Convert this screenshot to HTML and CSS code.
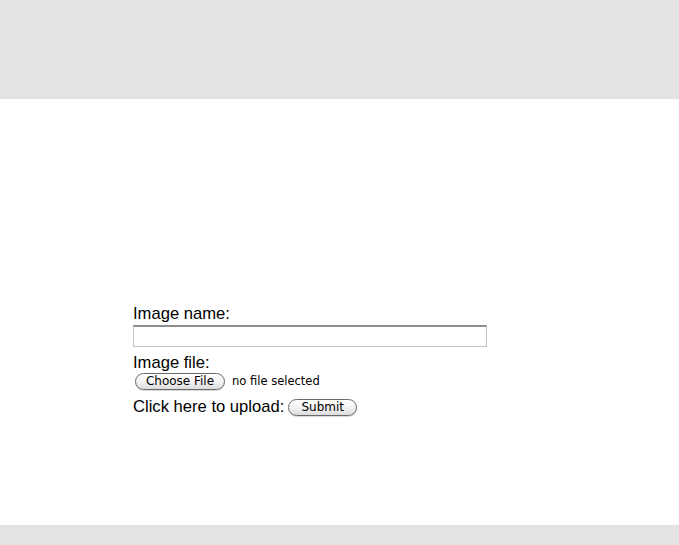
FILE: index.html
```html
<!DOCTYPE html>
<html>
<head>
<meta charset="utf-8">
<link rel="stylesheet" href="styles.css">
</head>
<body>
<div class="header"></div>
<div class="main">
  <form class="upload-form">
    <div class="label-row">Image name:</div>
    <div class="text-input"></div>
    <div class="label-row label-file">Image file:</div>
    <div class="file-row">
      <span class="btn btn-choose">Choose File</span>
      <span class="file-status">no file selected</span>
    </div>
    <div class="submit-row">
      <span class="submit-label">Click here to upload:</span>
      <span class="btn btn-submit">Submit</span>
    </div>
  </form>
</div>
<div class="footer"></div>
</body>
</html>
```
FILE: styles.css
```css
html, body {
  margin: 0;
  padding: 0;
  background: #ffffff;
}
body {
  width: 679px;
  height: 545px;
  overflow: hidden;
  font-family: "Liberation Sans", Arial, sans-serif;
  color: #000;
}
.header {
  height: 99px;
  background: #e3e3e3;
}
.main {
  height: 426px;
  box-sizing: border-box;
  padding: 206px 0 0 133px;
}
.footer {
  height: 20px;
  background: #e3e3e3;
}
.upload-form {
  display: flex;
  flex-direction: column;
  align-items: flex-start;
  margin: 0;
}
.label-row {
  font-size: 16.6px;
  line-height: 18px;
  height: 18px;
}
.text-input {
  margin-top: 2px;
  width: 354px;
  height: 22px;
  box-sizing: border-box;
  border: 1px solid #c4c4c4;
  border-top: 2px solid #8e8e8e;
  background: #fff;
}
.label-file {
  margin-top: 7px;
}
.file-row {
  margin-top: 1px;
  display: flex;
  align-items: center;
  height: 17px;
  padding-left: 2px;
}
.btn {
  display: inline-flex;
  align-items: center;
  justify-content: center;
  box-sizing: border-box;
  height: 17px;
  border: 1px solid #6a6a6a;
  border-radius: 9px;
  background: linear-gradient(#ffffff 0%, #f3f3f3 50%, #dcdcdc 100%);
  font-family: "DejaVu Sans", "Lucida Grande", sans-serif;
  font-size: 12px;
  line-height: 15px;
  color: #000;
  box-shadow: 0 1px 0 rgba(0,0,0,0.15);
}
.btn-choose {
  width: 90px;
}
.file-status {
  margin-left: 7px;
  font-family: "DejaVu Sans", "Lucida Grande", sans-serif;
  font-size: 11.5px;
  line-height: 15px;
}
.submit-row {
  margin-top: 8px;
  display: flex;
  align-items: center;
  height: 18px;
}
.submit-label {
  font-size: 16.6px;
  line-height: 18px;
}
.btn-submit {
  width: 69px;
  margin-left: 4px;
  margin-top: 1px;
}
```
